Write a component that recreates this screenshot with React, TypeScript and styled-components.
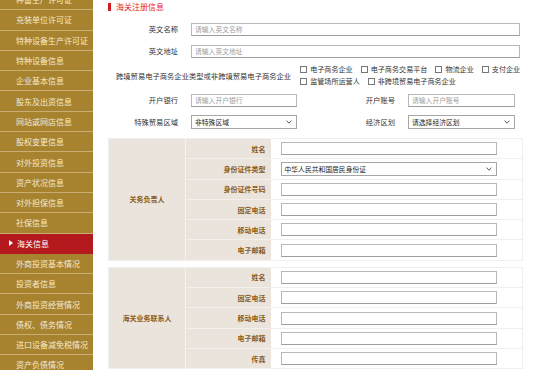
import styled, { createGlobalStyle } from "styled-components";

const GlobalStyle = createGlobalStyle`
  html, body {
    margin: 0;
    height: 370px;
    overflow: hidden;
    background: #fff;
  }
  body {
    font-family: "Noto Sans CJK SC", "Noto Sans", sans-serif;
  }
  * { box-sizing: border-box; }
`;

const menuItems = [
  "种畜生产许可证",
  "充装单位许可证",
  "特种设备生产许可证",
  "特种设备信息",
  "企业基本信息",
  "股东及出资信息",
  "网站或网店信息",
  "股权变更信息",
  "对外投资信息",
  "资产状况信息",
  "对外担保信息",
  "社保信息",
  "海关信息",
  "外商投资基本情况",
  "投资者信息",
  "外商投资经营情况",
  "债权、债务情况",
  "进口设备减免税情况",
  "资产负债情况",
];

const ACTIVE = "海关信息";

const checkRows = [
  ["电子商务企业", "电子商务交易平台", "物流企业", "支付企业"],
  ["监管场所运营人", "非跨境贸易电子商务企业"],
];

const chiefRows = ["姓名", "身份证件类型", "身份证件号码", "固定电话", "移动电话", "电子邮箱"];
const contactRows = ["姓名", "固定电话", "移动电话", "电子邮箱", "传真"];

function Chevron() {
  return (
    <svg width="6" height="4" viewBox="0 0 6 4">
      <path d="M0.5 0.6 L3 3.2 L5.5 0.6" fill="none" stroke="#444" strokeWidth="0.9" />
    </svg>
  );
}

function SelectField({ value, $w }: { value: string; $w: string }) {
  return (
    <SelectBox $w={$w} role="combobox">
      <span>{value}</span>
      <Chevron />
    </SelectBox>
  );
}

function PersonTable({ title, rows }: { title: string; rows: string[] }) {
  return (
    <InfoTable>
      <colgroup>
        <col style={{ width: 77 }} />
        <col style={{ width: 85 }} />
        <col />
      </colgroup>
      <tbody>
        {rows.map((r, i) => (
          <tr key={r}>
            {i === 0 && <GroupCell rowSpan={rows.length}>{title}</GroupCell>}
            <LabelCell>{r}</LabelCell>
            <ValueCell>
              {r === "身份证件类型" ? (
                <SelectField value="中华人民共和国居民身份证" $w="216px" />
              ) : (
                <TextInput $w="216px" />
              )}
            </ValueCell>
          </tr>
        ))}
      </tbody>
    </InfoTable>
  );
}

export default function App() {
  return (
    <>
      <GlobalStyle />
      <Page>
        <Sidebar>
          {menuItems.map((m) => (
            <MenuItem key={m} $active={m === ACTIVE}>
              {m}
            </MenuItem>
          ))}
        </Sidebar>
        <Main>
          <SectionTitle>海关注册信息</SectionTitle>
          <Form>
            <Row $cols="70px 1fr">
              <Label>英文名称</Label>
              <TextInput placeholder="请输入英文名称" />
            </Row>
            <Row $cols="70px 1fr">
              <Label>英文地址</Label>
              <TextInput placeholder="请输入英文地址" />
            </Row>
            <CheckRow>
              <Label>跨境贸易电子商务企业类型或非跨境贸易电子商务企业</Label>
              <CheckGroup>
                {checkRows.map((line, i) => (
                  <CheckLine key={i}>
                    {line.map((c) => (
                      <CheckItem key={c}>
                        <Box />
                        {c}
                      </CheckItem>
                    ))}
                  </CheckLine>
                ))}
              </CheckGroup>
            </CheckRow>
            <Row $cols="70px 106px 85px 107px">
              <Label>开户银行</Label>
              <TextInput placeholder="请输入开户银行" />
              <Label>开户账号</Label>
              <TextInput placeholder="请输入开户账号" />
            </Row>
            <Row $cols="70px 106px 85px 107px">
              <Label>特殊贸易区域</Label>
              <SelectField value="非特殊区域" $w="106px" />
              <Label>经济区划</Label>
              <SelectField value="请选择经济区划" $w="107px" />
            </Row>
          </Form>
          <PersonTable title="关务负责人" rows={chiefRows} />
          <PersonTable title="海关业务联系人" rows={contactRows} />
        </Main>
      </Page>
    </>
  );
}

const Page = styled.div`
  display: flex;
  width: 553px;
  height: 370px;
  overflow: hidden;
`;

const Sidebar = styled.nav`
  width: 93px;
  flex-shrink: 0;
  margin-top: -10px;
  background: #a8832f;
  align-self: flex-start;
`;

const MenuItem = styled.div<{ $active?: boolean }>`
  display: flex;
  align-items: center;
  gap: 4px;
  height: 20.3px;
  padding-left: ${(p) => (p.$active ? "9px" : "16px")};
  border-bottom: 1px solid ${(p) => (p.$active ? "#b3191d" : "#c9ad72")};
  background: ${(p) => (p.$active ? "#b3191d" : "transparent")};
  color: ${(p) => (p.$active ? "#fff" : "#f6ead0")};
  font-size: 8px;
  white-space: nowrap;

  &::before {
    content: "";
    display: ${(p) => (p.$active ? "block" : "none")};
    border-left: 4px solid #fff;
    border-top: 3px solid transparent;
    border-bottom: 3px solid transparent;
  }
`;

const Main = styled.main`
  flex: 1;
  padding: 0 34px 0 15px;
  background: #fff;
  font-size: 7px;
`;

const SectionTitle = styled.h2`
  margin: 0;
  height: 13px;
  display: flex;
  align-items: center;
  gap: 5px;
  font-size: 8px;
  font-weight: normal;
  color: #e8242b;

  &::before {
    content: "";
    width: 3px;
    height: 8px;
    background: #d41a20;
  }
`;

const Form = styled.div`
  margin-top: 5px;
  padding-right: 3px;
`;

const Row = styled.div<{ $cols: string }>`
  display: grid;
  grid-template-columns: ${(p) => p.$cols};
  column-gap: 13px;
  align-items: center;
  height: 22px;
`;

const Label = styled.span`
  text-align: right;
  font-size: 7.3px;
  color: #333;
  white-space: nowrap;
`;

const TextInput = styled.input<{ $w?: string }>`
  display: block;
  width: ${(p) => p.$w ?? "100%"};
  height: 13px;
  margin: 0;
  padding: 0 3px;
  border: 1px solid #b8b8b8;
  border-bottom-color: #9e9e9e;
  border-radius: 0;
  font-family: inherit;
  font-size: 6.8px;
  color: #333;
  outline: none;
  background: #fff;

  &::placeholder {
    color: #a0a0a0;
  }
`;

const SelectBox = styled.div<{ $w: string }>`
  display: flex;
  align-items: center;
  justify-content: space-between;
  width: ${(p) => p.$w};
  height: 14px;
  padding: 0 4px 0 3px;
  border: 1px solid #a6a6a6;
  background: #fff;
  font-size: 6.8px;
  color: #222;
  white-space: nowrap;
`;

const CheckRow = styled.div`
  display: flex;
  align-items: center;
  gap: 9px;
  height: 27px;
  padding-left: 8px;
`;

const CheckGroup = styled.div`
  display: flex;
  flex-direction: column;
  gap: 3px;
`;

const CheckLine = styled.div`
  display: flex;
  gap: 8px;
`;

const CheckItem = styled.label`
  display: flex;
  align-items: center;
  gap: 3px;
  font-size: 7.1px;
  color: #333;
  white-space: nowrap;
  line-height: 9px;
`;

const Box = styled.span`
  width: 7px;
  height: 7px;
  border: 1px solid #777;
  background: #fff;
`;

const InfoTable = styled.table`
  width: 100%;
  margin-top: 5px;
  border-collapse: collapse;
  table-layout: fixed;
  border: 1px solid #efefef;

  & + & {
    margin-top: 6px;
  }

  tr {
    height: 20.3px;
  }
`;

const GroupCell = styled.td`
  background: #ebe4dc;
  border-right: 1px solid #f6f2ee;
  text-align: center;
  font-size: 7px;
  font-weight: bold;
  color: #8a5c1c;
  padding: 0;
`;

const LabelCell = styled.td`
  background: #ebe4dc;
  border-bottom: 1px solid #f4f0eb;
  text-align: right;
  padding: 0 5px 0 0;
  font-size: 7px;
  font-weight: bold;
  color: #8a5c1c;
  white-space: nowrap;
  line-height: 10px;
`;

const ValueCell = styled.td`
  background: #fff;
  border-bottom: 1px solid #efefef;
  padding: 0 0 0 10px;
  line-height: 10px;
`;
